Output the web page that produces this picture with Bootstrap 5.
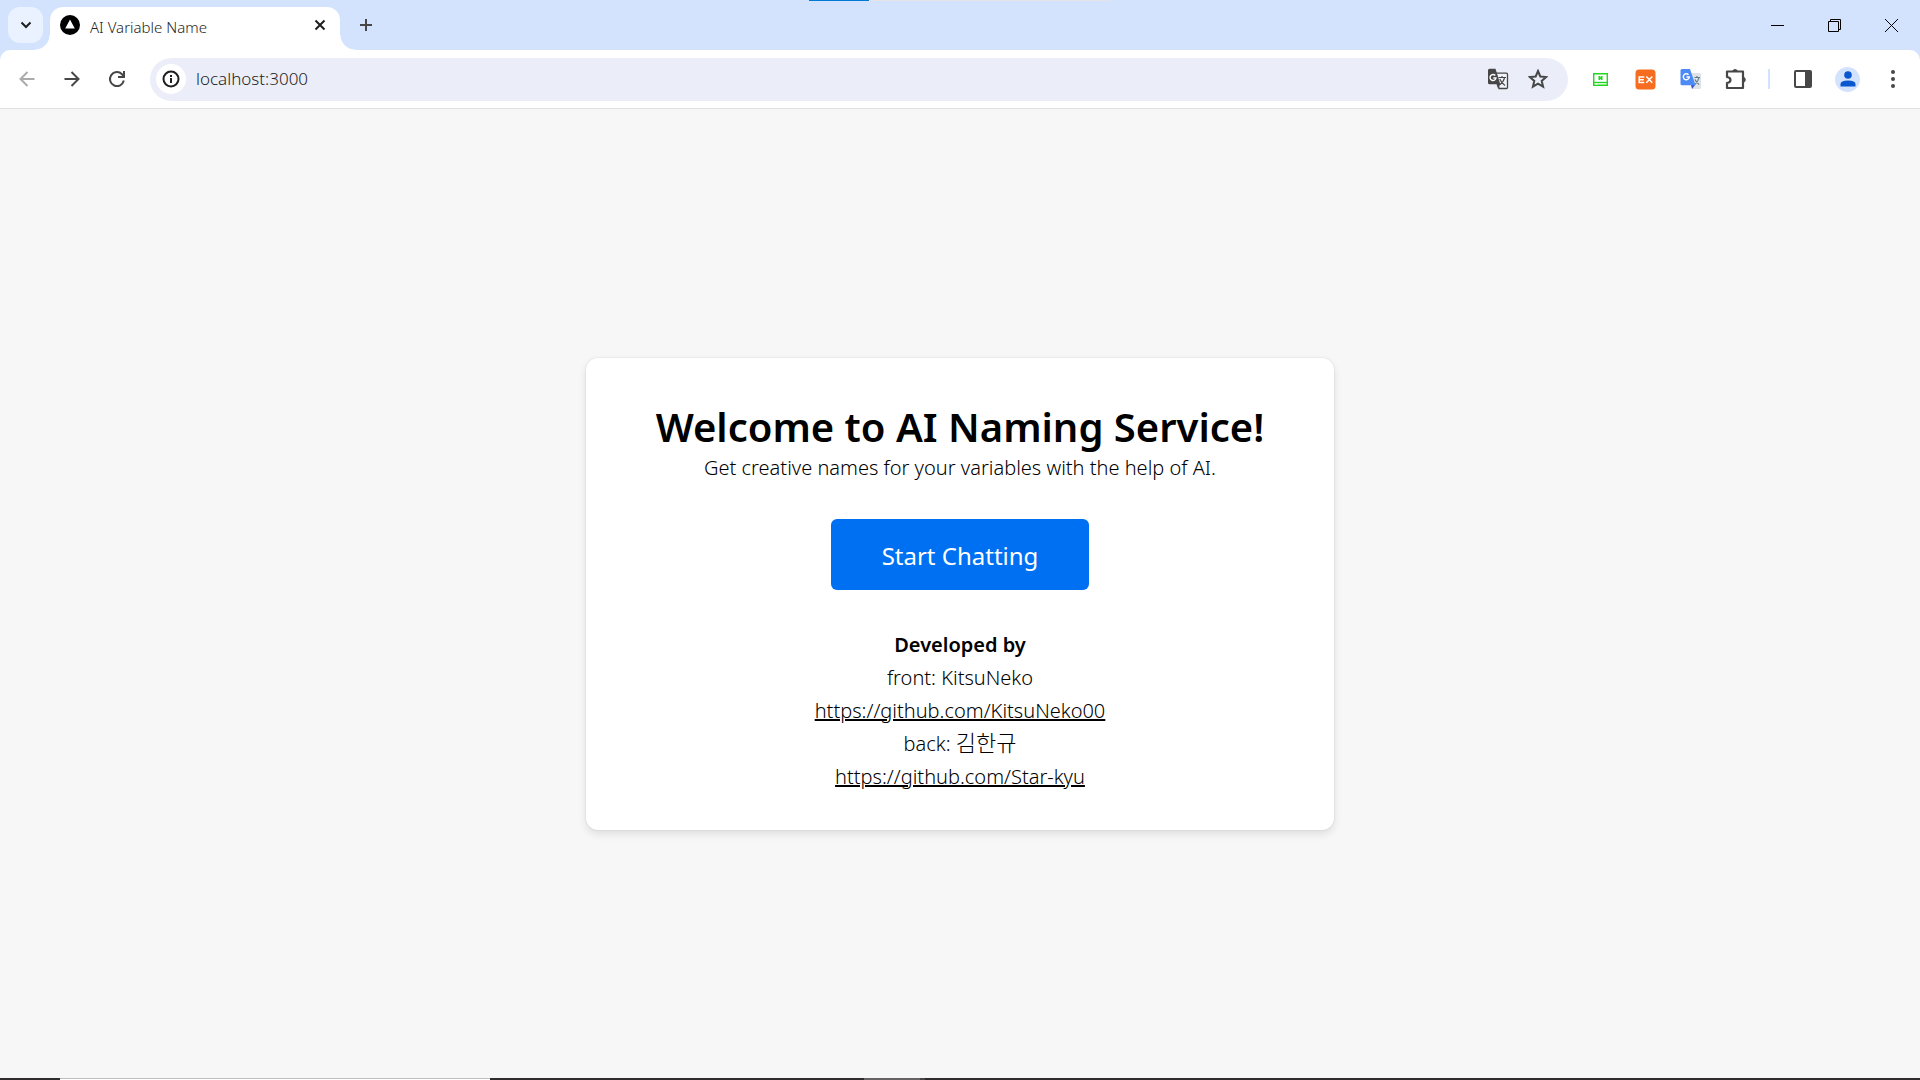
<!DOCTYPE html>
<html lang="en">
<head>
<meta charset="utf-8">
<meta name="viewport" content="width=device-width, initial-scale=1">
<title>AI Variable Name</title>
<link rel="stylesheet" href="https://cdn.jsdelivr.net/npm/bootstrap@5.3.0/dist/css/bootstrap.min.css">
<style>
  body { font-family: "Noto Sans", "Noto Sans CJK KR", sans-serif; background: #f7f7f7; color: #000; }
  button { border: 0; background: none; padding: 0; color: #474747; display: flex; align-items: center; justify-content: center; }
  svg { display: block; flex: none; }

  /* tab strip */
  .tabstrip { height: 50px; background: #d3e3fd; padding-left: 8px; }
  .tab-search { width: 35px; height: 36px; margin-top: 7px; border-radius: 12px; background: #ebf2ff; color: #1f1f1f; }
  .browser-tab { position: relative; width: 290px; height: 43px; margin: 7px 0 0 7px; padding: 0 14px 8px 10px; background: #fff; border-radius: 13px 13px 0 0; font-size: 15px; font-weight: 300; color: #1f1f1f; }
  .browser-tab::before, .browser-tab::after { content: ""; position: absolute; bottom: 0; width: 15px; height: 15px; }
  .browser-tab::before { right: 100%; background: radial-gradient(circle at 0 0, transparent 14px, #fff 15px); }
  .browser-tab::after { left: 100%; background: radial-gradient(circle at 100% 0, transparent 14px, #fff 15px); }
  .tab-title { margin: 5px 0 0 10px; }
  .load-line { position: absolute; top: 0; left: 50%; width: 301px; height: 1px; margin-left: -151px; background: #e3e4e6; }
  .load-line span { display: block; width: 60px; height: 1px; background: #0078d4; }
  .win-btn { width: 57px; height: 50px; color: #000; }

  /* toolbar */
  .toolbar-wrap { background: #d3e3fd; }
  .toolbar-inner { height: 59px; background: #fff; border-bottom: 1px solid #e1e1e3; border-radius: 10px 10px 0 0; }
  .tool-btn { width: 45px; height: 42px; }
  .omnibox { height: 43px; border-radius: 22px; background: #ebeef8; padding: 0 10px 0 6px; margin-left: 11px; }
  .site-info { width: 30px; height: 30px; border-radius: 50%; background: #fff; color: #1f1f1f; }
  .address { border: 0; background: transparent; outline: 0; font-size: 17px; font-weight: 300; color: #1f1f1f; padding: 0; margin-left: 10px; }
  .omni-btn { width: 40px; height: 42px; }
  .tool-icons { margin-left: 10px; padding-right: 5px; }
  .tool-divider { width: 2px; height: 20px; background: #d3e3fd; margin: 0 10px; }
  .avatar { width: 25px; height: 25px; border-radius: 50%; background: #d3e3fd; }

  /* welcome page */
  .welcome { width: 748px; max-width: 94%; padding: 45px 24px 37px; background: #fff; border-radius: 12px; box-shadow: 0 4px 8px rgba(0,0,0,.1), 0 0 2px rgba(0,0,0,.12); font-size: 20px; font-weight: 300; line-height: 33px; }
  .welcome h1 { font-size: 40px; line-height: 48px; font-weight: 600; }
  .start-btn { width: 258px; height: 71px; margin: 35px auto 38px; border-radius: 6px; background: #0070f3; color: #fff; font-size: 24px; font-weight: 400; padding: 8px 0 4px; }
  .start-btn:hover { background: #005fd1; color: #fff; }
  .welcome a { color: #000; text-decoration: underline; }
  .welcome [lang="ko"] { font-size: 22px; line-height: 24px; }

  /* taskbar edge */
  .taskbar { height: 2px; background: #302d2f; }
  .task-start { width: 60px; }
  .task-open { width: 430px; background: #fff; border-top: 1px solid #bebebe; }
  .task-hover { width: 56px; background: #666364; margin-left: 374px; }
  .task-next { width: 5px; background: #494647; }
</style>
</head>
<body>
<div class="d-flex flex-column min-vh-100">
  <header>
    <div class="tabstrip d-flex align-items-start position-relative">
      <div class="load-line"><span></span></div>
      <button class="tab-search" aria-label="Search tabs">
        <svg width="12" height="12" viewBox="0 0 12 12" fill="none" stroke="currentColor" stroke-width="2"><path d="M1.5 3.5 6 8l4.500-4.500"/></svg>
      </button>
      <div class="browser-tab d-flex align-items-center">
        <svg width="20" height="20" viewBox="0 0 20 20"><circle cx="10" cy="10" r="10" fill="#000"/><path d="M10 4.500 14.800 13.500H5.200z" fill="#fff"/></svg>
        <span class="tab-title flex-grow-1">AI Variable Name</span>
        <button aria-label="Close tab"><svg width="12" height="12" viewBox="0 0 12 12" stroke="#1f1f1f" stroke-width="2"><path d="m1.500 1.500 9 9m0-9-9 9"/></svg></button>
      </div>
      <button class="ms-3 pe-1 ps-1 h-100" aria-label="New tab"><svg width="12" height="12" viewBox="0 0 12 12" stroke="#474747" stroke-width="2"><path d="M6 0v12M0 6h12"/></svg></button>
      <div class="d-flex ms-auto">
        <button class="win-btn" aria-label="Minimize"><svg width="13" height="13" viewBox="0 0 13 13" stroke="currentColor"><path d="M0 6.500h13"/></svg></button>
        <button class="win-btn" aria-label="Restore"><svg width="13" height="13" viewBox="0 0 13 13" fill="none" stroke="currentColor"><path d="M.5 2.500h10v10H.5zM2.500 2.500v-2h10v10h-2"/></svg></button>
        <button class="win-btn" aria-label="Close"><svg width="13" height="13" viewBox="0 0 13 13" stroke="currentColor"><path d="m0 0 13 13M13 0 0 13"/></svg></button>
      </div>
    </div>
    <div class="toolbar-wrap">
      <div class="toolbar-inner d-flex align-items-center">
        <button class="tool-btn ms-1" aria-label="Back"><svg width="16" height="16" viewBox="0 0 16 16" fill="none" stroke="#ababab" stroke-width="2"><path d="M15.500 8H2M8.500 1 1.500 8l7 7"/></svg></button>
        <button class="tool-btn" aria-label="Forward"><svg width="16" height="16" viewBox="0 0 16 16" fill="none" stroke="currentColor" stroke-width="2"><path d="M.5 8H14M7.500 1l7 7-7 7"/></svg></button>
        <button class="tool-btn" aria-label="Reload"><svg width="18" height="18" viewBox="0 0 18 18" fill="none" stroke="currentColor" stroke-width="2"><path d="M15.800 10.500A7 7 0 1 1 14 4.200l1.500 1.600M16 1v6h-6"/></svg></button>
        <div class="omnibox d-flex align-items-center flex-grow-1">
          <button class="site-info" aria-label="Site information"><svg width="18" height="18" viewBox="0 0 18 18" fill="none" stroke="currentColor" stroke-width="2"><circle cx="9" cy="9" r="7.500"/><path d="M9 8v5M9 5v2"/></svg></button>
          <input class="address flex-grow-1" type="text" value="localhost:3000" aria-label="Address">
          <button class="omni-btn" aria-label="Translate this page">
            <svg width="22" height="22" viewBox="0 0 22 22"><path d="M9 5.200h10.500q1 0 1 1v13.300q0 1-1 1H12z" fill="#f1f3fa" stroke="#474747" stroke-width="1.300"/><path d="M2.500.8h6l4.800 15.400H2.500q-1.500 0-1.500-1.500V2.300Q1 .8 2.500.8zM9.500 16.200h3.800L11 20.500z" fill="#474747"/><path d="M8.300 7.500A3 3 0 1 0 9 10H6.300" fill="none" stroke="#fff" stroke-width="1.400"/><path d="M11.500 9.500h7.500M15 8v1.500M17.600 9.500c-.6 3-2.500 5.500-4.800 7.200M12.800 11c1.200 3 3 5 5.200 6.500" fill="none" stroke="#474747" stroke-width="1.200"/></svg>
          </button>
          <button class="omni-btn" aria-label="Bookmark this page">
            <svg width="20" height="20" viewBox="0 0 20 20" fill="none" stroke="currentColor" stroke-width="2"><path d="m10 2 2.300 5.500 5.900.5-4.500 3.900 1.400 5.800-5.100-3.100-5.100 3.100 1.400-5.800L1.800 8l5.900-.5z"/></svg>
          </button>
        </div>
        <div class="tool-icons d-flex align-items-center">
          <button class="tool-btn" aria-label="Naver extension"><svg width="15" height="13" viewBox="0 0 15 13" fill="none" stroke="#20d81f"><path d="M.7.7h13.600v11.600H.7z" stroke-width="1.400"/><path d="M1 9.500h13" stroke-width="1.400"/><path d="M5.500 3h1.500l1 1.500V3h1.500v4H8L7 5.500V7H5.500z" fill="#20d81f" stroke="none"/><path d="M2.500 11h2" stroke="#fff"/></svg></button>
          <button class="tool-btn" aria-label="EX extension"><svg width="21" height="21" viewBox="0 0 21 21"><rect x=".5" y=".5" width="20" height="20" rx="3.500" fill="#f66d1f"/><path d="M9.300 8H4.200v5.500h5.100M4.200 10.700h4.600M11.300 7.600l6 6.200M17.300 7.600l-6 6.200" fill="none" stroke="#fff" stroke-width="1.500"/></svg></button>
          <button class="tool-btn" aria-label="Translate extension"><svg width="22" height="22" viewBox="0 0 22 22"><path d="M9 5h10.500q1.500 0 1.500 1.500v13q0 1.500-1.500 1.500H12z" fill="#dfe2e7"/><path d="M14.500 9.500h5.500M17 8v1.500M19 9.500c-.5 3-2 5-4 6.700M15 11.500c1 2.500 2.500 3.800 4 5" fill="none" stroke="#607d8b" stroke-width="1.200"/><path d="M11 17h4l-3 4z" fill="#3450c4"/><path d="M2 1h8l5.500 16.300H2q-1.500 0-1.500-1.500V2.500Q.5 1 2 1z" fill="#4c8bf5"/><path d="M8.500 6.700A3 3 0 1 0 9.300 9H6.500" fill="none" stroke="#fff" stroke-width="1.400"/></svg></button>
          <button class="tool-btn" aria-label="Extensions"><svg width="23" height="22" viewBox="0 0 23 22"><path d="M3 3.500h16v16.500H3v-5q3.500-.5 3.500-3T3 9z" fill="none" stroke="#474747" stroke-width="2.200" stroke-linejoin="round"/><path d="M8.500 3.500a2.700 2.700 0 0 1 5.200 0M19 9a2.800 2.800 0 0 1 0 5.500" fill="#474747" stroke="#474747"/></svg></button>
          <div class="tool-divider"></div>
          <button class="tool-btn" aria-label="Side panel"><svg width="18" height="18" viewBox="0 0 18 18"><rect x="1" y="1" width="16" height="16" rx="1" fill="none" stroke="#474747" stroke-width="2"/><path d="M11 1h6v16h-6z" fill="#474747"/></svg></button>
          <button class="tool-btn" aria-label="Profile"><span class="avatar d-flex align-items-center justify-content-center"><svg width="16" height="16" viewBox="0 0 16 16" fill="#0b57d0"><circle cx="8" cy="4" r="3.800"/><path d="M.5 15.500V13q0-3.500 7.500-3.500t7.500 3.500v2.500z"/></svg></span></button>
          <button class="tool-btn" aria-label="Menu"><svg width="4" height="18" viewBox="0 0 4 18" fill="#474747"><circle cx="2" cy="2" r="2"/><circle cx="2" cy="9" r="2"/><circle cx="2" cy="16" r="2"/></svg></button>
        </div>
      </div>
    </div>
  </header>

  <main class="flex-grow-1 d-flex align-items-center justify-content-center">
    <section class="welcome text-center">
      <h1 class="m-0">Welcome to AI Naming Service!</h1>
      <p class="m-0">Get creative names for your variables with the help of AI.</p>
      <button class="btn start-btn" type="button">Start Chatting</button>
      <div class="fw-semibold">Developed by</div>
      <div>front: KitsuNeko</div>
      <div><a href="https://github.com/KitsuNeko00">https://github.com/KitsuNeko00</a></div>
      <div>back: <span lang="ko">김한규</span></div>
      <div><a href="https://github.com/Star-kyu">https://github.com/Star-kyu</a></div>
    </section>
  </main>

  <div class="taskbar d-flex">
    <div class="task-start"></div><div class="task-open"></div><div class="task-hover"></div><div class="task-next"></div>
  </div>
</div>
<script src="https://cdn.jsdelivr.net/npm/bootstrap@5.3.0/dist/js/bootstrap.bundle.min.js"></script>
</body>
</html>
